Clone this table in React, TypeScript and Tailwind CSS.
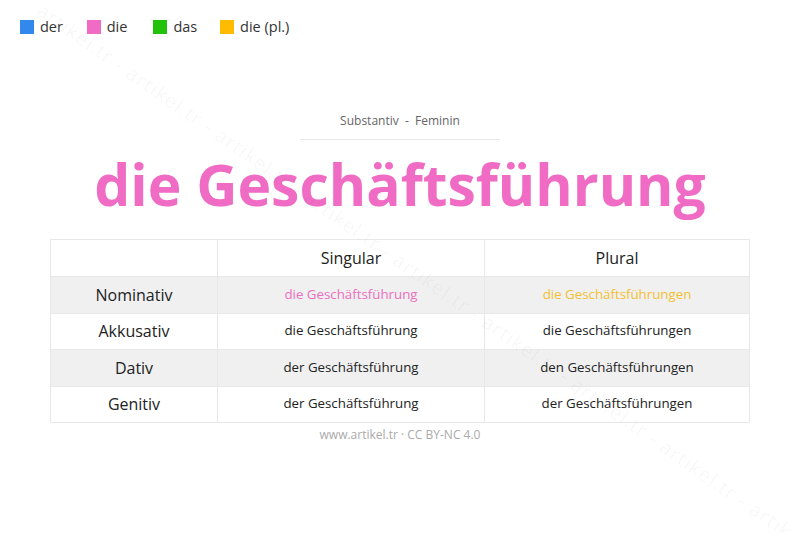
import React from "react"

const legend = [
  { label: "der", color: "bg-[#3388ec]" },
  { label: "die", color: "bg-[#f06cc4]" },
  { label: "das", color: "bg-[#22c20a]" },
  { label: "die (pl.)", color: "bg-[#ffbb00]" },
]

const rows = [
  { case: "Nominativ", sg: "die Geschäftsführung", pl: "die Geschäftsführungen", color: true },
  { case: "Akkusativ", sg: "die Geschäftsführung", pl: "die Geschäftsführungen" },
  { case: "Dativ", sg: "der Geschäftsführung", pl: "den Geschäftsführungen" },
  { case: "Genitiv", sg: "der Geschäftsführung", pl: "der Geschäftsführungen" },
]

export default function App() {
  return (
    <div
      className="relative w-[800px] h-[533px] overflow-hidden bg-white text-[#222]"
      style={{ fontFamily: '"Open Sans", "Noto Sans", sans-serif' }}
    >
      <div className="flex pl-5 pt-[17px] text-[14.5px] leading-5">
        {legend.map((l) => (
          <div key={l.label} className="flex w-[66.7px] shrink-0 items-center gap-[6px] whitespace-nowrap">
            <span className={`w-[14px] h-[14px] shrink-0 ${l.color}`} />
            <span className="text-[#333]">{l.label}</span>
          </div>
        ))}
      </div>

      <div className="flex flex-col items-center mt-[75px]">
        <div className="w-[200px] border-b border-[#e8e8e8] pb-[9px] text-center text-[12px] text-[#666]">
          Substantiv&nbsp; - &nbsp;Feminin
        </div>
        <h1 className="mt-[8px] text-[57px] leading-[72px] font-bold text-[#f06cc4]">die Geschäftsführung</h1>
      </div>

      <div className="mx-[50px] mt-[19px] border border-[#e8e8e8]">
        <div className="grid grid-cols-[166px_267px_1fr] h-[36px] items-stretch text-[16px]">
          <div />
          <div className="flex items-center justify-center border-l border-[#e8e8e8]">Singular</div>
          <div className="flex items-center justify-center border-l border-[#e8e8e8]">Plural</div>
        </div>
        {rows.map((r, i) => (
          <div
            key={r.case}
            className={`grid grid-cols-[166px_267px_1fr] h-[36.5px] border-t border-[#e8e8e8] ${i % 2 === 0 ? "bg-[#f0f0f0]" : "bg-white"}`}
          >
            <div className="flex items-center justify-center text-[16px]">{r.case}</div>
            <div
              className={`flex items-center justify-center border-l border-[#e8e8e8] text-[13.3px] ${r.color ? "text-[#ec6fc0]" : ""}`}
            >
              {r.sg}
            </div>
            <div
              className={`flex items-center justify-center border-l border-[#e8e8e8] text-[13.3px] ${r.color ? "text-[#f3c030]" : ""}`}
            >
              {r.pl}
            </div>
          </div>
        ))}
      </div>

      <div className="mt-[3px] text-center text-[12px] text-[#aaa]">www.artikel.tr · CC BY-NC 4.0</div>

      <div className="pointer-events-none absolute left-[48px] top-[-4px] origin-top-left rotate-[35deg] whitespace-nowrap text-[20px] tracking-[1px] text-[#000]/[0.04]">
        artikel.tr - artikel.tr - artikel.tr - artikel.tr - artikel.tr - artikel.tr - artikel.tr - artikel.tr - artikel.tr -
        artikel.tr
      </div>
    </div>
  )
}
